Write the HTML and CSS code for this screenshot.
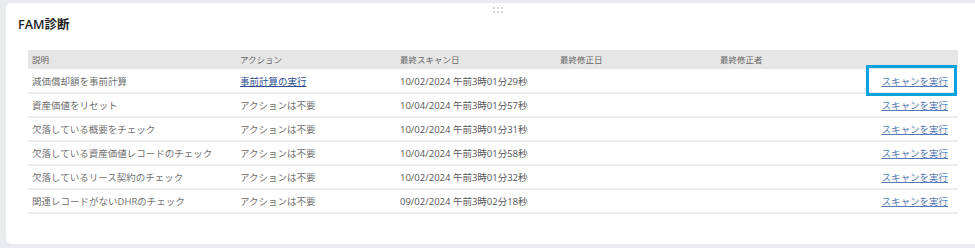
FILE: index.html
```html
<!DOCTYPE html>
<html lang="ja">
<head>
    <meta charset="UTF-8">
    <meta name="viewport" content="width=device-width, initial-scale=1.0">
    <title>FAM診断</title>
    <link rel="stylesheet" href="styles.css">
</head>
<body>
    <div class="card">
        <div class="handle"><span></span><span></span><span></span><span></span><span></span><span></span></div>
        <h2>FAM診断</h2>
        <table>
            <thead>
                <tr>
                    <th class="col-desc">説明</th>
                    <th class="col-mid">アクション</th>
                    <th class="col-mid">最終スキャン日</th>
                    <th class="col-mid">最終修正日</th>
                    <th class="col-mid">最終修正者</th>
                    <th class="col-run"></th>
                </tr>
            </thead>
            <tbody>
                <tr>
                    <td>減価償却額を事前計算</td>
                    <td><a href="#" class="link-action">事前計算の実行</a></td>
                    <td class="date">10/02/2024 午前3時01分29秒</td>
                    <td></td>
                    <td></td>
                    <td class="run"><a href="#" class="link-run focused">スキャンを実行</a></td>
                </tr>
                <tr>
                    <td>資産価値をリセット</td>
                    <td>アクションは不要</td>
                    <td class="date">10/04/2024 午前3時01分57秒</td>
                    <td></td>
                    <td></td>
                    <td class="run"><a href="#" class="link-run">スキャンを実行</a></td>
                </tr>
                <tr>
                    <td>欠落している概要をチェック</td>
                    <td>アクションは不要</td>
                    <td class="date">10/02/2024 午前3時01分31秒</td>
                    <td></td>
                    <td></td>
                    <td class="run"><a href="#" class="link-run">スキャンを実行</a></td>
                </tr>
                <tr>
                    <td>欠落している資産価値レコードのチェック</td>
                    <td>アクションは不要</td>
                    <td class="date">10/04/2024 午前3時01分58秒</td>
                    <td></td>
                    <td></td>
                    <td class="run"><a href="#" class="link-run">スキャンを実行</a></td>
                </tr>
                <tr>
                    <td>欠落しているリース契約のチェック</td>
                    <td>アクションは不要</td>
                    <td class="date">10/02/2024 午前3時01分32秒</td>
                    <td></td>
                    <td></td>
                    <td class="run"><a href="#" class="link-run">スキャンを実行</a></td>
                </tr>
                <tr>
                    <td>関連レコードがないDHRのチェック</td>
                    <td>アクションは不要</td>
                    <td class="date">09/02/2024 午前3時02分18秒</td>
                    <td></td>
                    <td></td>
                    <td class="run"><a href="#" class="link-run">スキャンを実行</a></td>
                </tr>
            </tbody>
        </table>
    </div>
</body>
</html>
```

FILE: styles.css
```css
body {
    font-family: "Open Sans", "Noto Sans CJK JP", sans-serif;
    background-color: #eaebef;
    margin: 0;
    padding: 3px 0 4px 6px;
}
.card {
    position: relative;
    background-color: #fff;
    border-radius: 5px 0 0 5px;
    height: 241px;
    box-sizing: border-box;
    padding: 13px 17px 0 12px;
}
.handle {
    position: absolute;
    top: 4px;
    left: 487px;
    display: grid;
    grid-template-columns: repeat(3, 2px);
    gap: 2px 2px;
}
.handle span {
    width: 2px;
    height: 2px;
    background-color: #d6d6d6;
}
h2 {
    margin: 0;
    font-size: 12.5px;
    font-weight: 600;
    color: #1f1f1f;
    line-height: 18px;
}
table {
    width: 930px;
    margin: 16px 0 0 10px;
    border-collapse: collapse;
    table-layout: fixed;
}
th {
    background-color: #e6e6e6;
    font-size: 8.5px;
    font-weight: normal;
    color: #666;
    text-align: left;
    height: 18px;
    padding: 0 4px;
    border-bottom: 1px solid #e6e6e6;
}
.col-desc {
    width: 200px;
}
.col-mid {
    width: 152px;
}
.col-run {
    width: 74px;
}
td {
    font-size: 9.5px;
    color: #707070;
    height: 22px;
    padding: 0 4px;
    border-bottom: 2px solid #ebebeb;
    white-space: nowrap;
}
tbody tr:first-child td {
    height: 23px;
}
.date {
    color: #555;
}
.run {
    text-align: right;
    padding-right: 10px;
}
.link-action {
    color: #2d4f8e;
    text-decoration: underline;
}
.link-run {
    color: #5479b2;
    text-decoration: underline;
    position: relative;
}
.focused::after {
    content: "";
    position: absolute;
    left: -15px;
    right: -9px;
    top: -10px;
    bottom: -8px;
    border: 3px solid #0ba3df;
}
```
